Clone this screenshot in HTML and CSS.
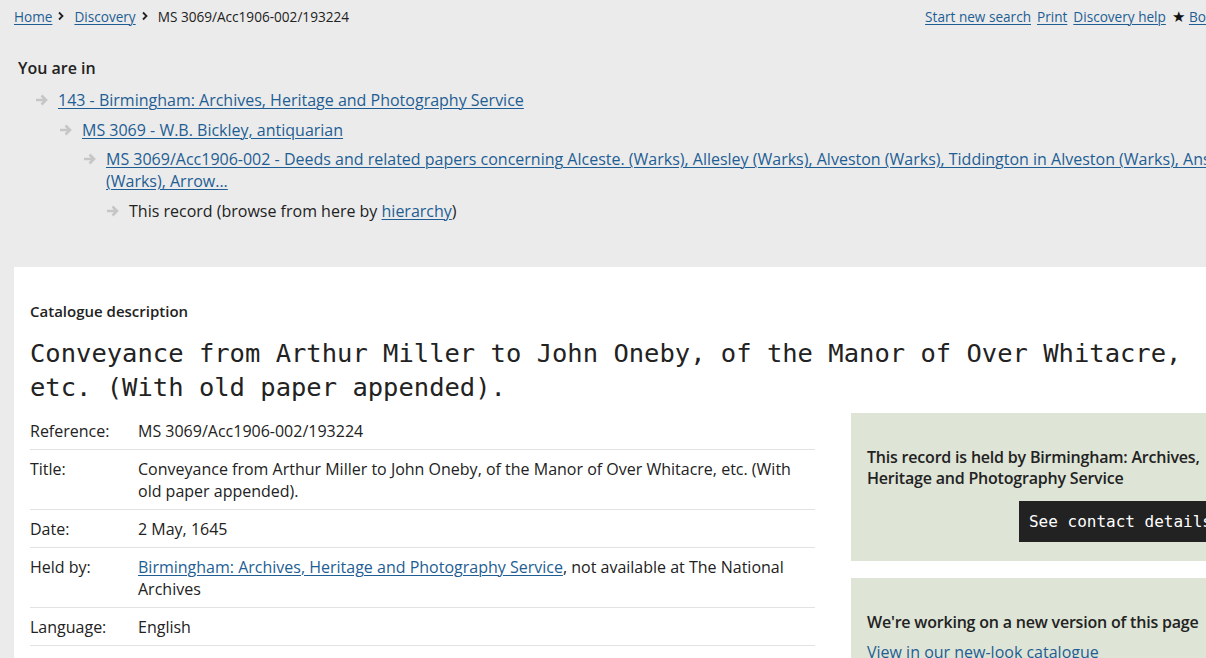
FILE: index.html
```html
<!DOCTYPE html>
<html lang="en">
<head>
    <meta charset="UTF-8">
    <title>MS 3069/Acc1906-002/193224 - Discovery</title>
    <link rel="stylesheet" href="styles.css">
</head>
<body>
    <div class="page">
        <div class="top-bar">
            <ol class="breadcrumbs">
                <li><a href="#">Home</a><svg class="chevron" viewBox="0 0 8 10"><path d="M2 1.5 5.5 5 2 8.5" fill="none" stroke="#222" stroke-width="1.8"/></svg></li>
                <li><a href="#">Discovery</a><svg class="chevron" viewBox="0 0 8 10"><path d="M2 1.5 5.5 5 2 8.5" fill="none" stroke="#222" stroke-width="1.8"/></svg></li>
                <li>MS 3069/Acc1906-002/193224</li>
            </ol>
            <ul class="page-actions">
                <li><a href="#">Start new search</a></li>
                <li><a href="#">Print</a></li>
                <li><a href="#">Discovery help</a></li>
                <li><span class="star">★</span><a href="#">Bookmark</a></li>
            </ul>
        </div>

        <div class="you-are-in">
            <h2>You are in</h2>
            <ul class="hierarchy">
                <li class="level-1">
                    <svg class="arrow" viewBox="0 0 14 12"><path d="M1 6h10.5M6.5 1.5 11 6l-4.5 4.5" fill="none" stroke="#c6c6c6" stroke-width="2.6"/></svg>
                    <a href="#">143 - Birmingham: Archives, Heritage and Photography Service</a>
                </li>
                <li class="level-2">
                    <svg class="arrow" viewBox="0 0 14 12"><path d="M1 6h10.5M6.5 1.5 11 6l-4.5 4.5" fill="none" stroke="#c6c6c6" stroke-width="2.6"/></svg>
                    <a href="#">MS 3069 - W.B. Bickley, antiquarian</a>
                </li>
                <li class="level-3">
                    <svg class="arrow" viewBox="0 0 14 12"><path d="M1 6h10.5M6.5 1.5 11 6l-4.5 4.5" fill="none" stroke="#c6c6c6" stroke-width="2.6"/></svg>
                    <a href="#">MS 3069/Acc1906-002 - Deeds and related papers concerning Alceste. (Warks), Allesley (Warks), Alveston (Warks), Tiddington in Alveston (Warks), Ansley (Warks), Arrow...</a>
                </li>
                <li class="level-4">
                    <svg class="arrow" viewBox="0 0 14 12"><path d="M1 6h10.5M6.5 1.5 11 6l-4.5 4.5" fill="none" stroke="#c6c6c6" stroke-width="2.6"/></svg>
                    <span>This record (browse from here by <a href="#">hierarchy</a>)</span>
                </li>
            </ul>
        </div>

        <div class="record-panel">
            <h3 class="section-title">Catalogue description</h3>
            <h1 class="record-title">Conveyance from Arthur Miller to John Oneby, of the Manor of Over Whitacre, etc. (With old paper appended).</h1>

            <div class="record-body">
                <table class="details">
                    <tr><th>Reference:</th><td>MS 3069/Acc1906-002/193224</td></tr>
                    <tr><th>Title:</th><td>Conveyance from Arthur Miller to John Oneby, of the Manor of Over Whitacre, etc. (With old paper appended).</td></tr>
                    <tr><th>Date:</th><td>2 May, 1645</td></tr>
                    <tr><th>Held by:</th><td><a href="#">Birmingham: Archives, Heritage and Photography Service</a>, not available at The National Archives</td></tr>
                    <tr><th>Language:</th><td>English</td></tr>
                </table>

                <aside class="sidebar">
                    <div class="side-box held-box">
                        <p class="side-heading">This record is held by Birmingham: Archives, Heritage and Photography Service</p>
                        <div class="btn-row">
                            <a class="btn-dark" href="#">See contact details</a>
                        </div>
                    </div>
                    <div class="side-box">
                        <p class="side-heading">We're working on a new version of this page</p>
                        <a class="side-link" href="#">View in our new-look catalogue</a>
                    </div>
                </aside>
            </div>
        </div>
    </div>
</body>
</html>
```

FILE: styles.css
```css
:root {
    --bg-grey: #ebebeb;
    --text: #222;
    --link: #1e5e94;
    --rule: #e2e2e2;
    --green: #dee4d6;
}

html, body {
    margin: 0;
    padding: 0;
    background: var(--bg-grey);
    overflow: hidden;
}

body {
    font-family: "Open Sans", "Liberation Sans", sans-serif;
    color: var(--text);
}

a {
    color: var(--link);
    text-decoration: underline;
    text-underline-offset: 2px;
    text-decoration-thickness: 1px;
}

.page {
    width: 1240px;
    padding: 0 0 0 14px;
}

/* top bar */
.top-bar {
    display: flex;
    justify-content: space-between;
    align-items: center;
    height: 32px;
    font-size: 13.6px;
}

.breadcrumbs,
.page-actions {
    list-style: none;
    margin: 0;
    padding: 0;
    display: flex;
    align-items: center;
}

.breadcrumbs li {
    display: flex;
    align-items: center;
}

.chevron {
    width: 8px;
    height: 10px;
    margin: 0 9px 0 5px;
}

.page-actions li {
    margin-left: 6px;
    display: flex;
    align-items: center;
}

.star {
    font-size: 15px;
    margin-right: 4px;
    color: #111;
}

/* you are in */
.you-are-in {
    padding: 20px 0 45px 4px;
}

.you-are-in h2 {
    margin: 0;
    font-size: 16px;
    font-weight: 600;
    line-height: 32px;
}

.hierarchy {
    list-style: none;
    margin: 0;
    padding: 0;
    font-size: 16px;
    line-height: 22px;
}

.hierarchy li {
    display: flex;
    align-items: flex-start;
    margin-top: 7.5px;
}

.hierarchy li:first-child {
    margin-top: 5px;
}

.arrow {
    flex: none;
    width: 14px;
    height: 12px;
    margin: 5px 9px 0 0;
}

.level-1 { padding-left: 17px; }
.level-2 { padding-left: 41px; }
.level-3 { padding-left: 65px; }
.level-4 { padding-left: 88px; }

/* record panel */
.record-panel {
    background: #fff;
    padding: 33px 16px 40px;
}

.section-title {
    margin: 0;
    font-size: 15px;
    font-weight: 600;
    line-height: 22px;
}

.record-title {
    max-width: 1180px;
    margin: 14px 0 8px;
    font-family: "DejaVu Sans Mono", "Liberation Mono", monospace;
    font-size: 25.5px;
    font-weight: normal;
    line-height: 34px;
}

.record-body {
    display: flex;
    align-items: flex-start;
    gap: 36px;
}

.details {
    width: 785px;
    flex: none;
    border-collapse: collapse;
    font-size: 16px;
    line-height: 22px;
}

.details th,
.details td {
    text-align: left;
    vertical-align: top;
    font-weight: normal;
    padding: 8px 0 7px;
    border-bottom: 1px solid var(--rule);
}

.details th {
    width: 108px;
}

/* sidebar */
.sidebar {
    width: 387px;
    flex: none;
    margin-top: 1px;
}

.side-box {
    background: var(--green);
    padding: 34px 16px 19px;
    margin-bottom: 17px;
}

.side-heading {
    margin: 0;
    font-size: 16px;
    font-weight: 600;
    line-height: 21px;
    color: #222;
    letter-spacing: -0.2px;
}

.btn-row {
    display: flex;
    justify-content: flex-end;
    margin-top: 12px;
}

.btn-dark {
    background: #222;
    color: #fff;
    text-decoration: none;
    font-family: "DejaVu Sans Mono", "Liberation Mono", monospace;
    font-size: 16px;
    line-height: 41px;
    padding: 0 10px;
}

.side-link {
    display: inline-block;
    margin-top: 8px;
    font-size: 16px;
}
```
